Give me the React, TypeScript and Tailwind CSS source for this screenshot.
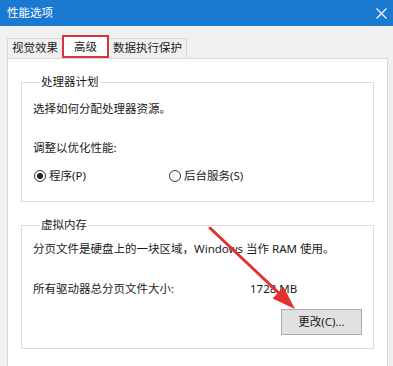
import React from 'react';

const font = "font-['Noto_Sans','Noto_Sans_CJK_SC',sans-serif]";

function Radio({ checked, label }: { checked?: boolean; label: string }) {
  return (
    <div className="flex items-center gap-[3px]">
      <span className="w-[12px] h-[12px] rounded-full border border-[#333] bg-white flex items-center justify-center">
        {checked && <span className="w-[6px] h-[6px] rounded-full bg-[#222]" />}
      </span>
      <span>{label}</span>
    </div>
  );
}

function Tab({ label, active }: { label: string; active?: boolean }) {
  if (active) {
    return (
      <div className="h-[23px] -mx-[1px] px-[10px] pt-[2px] bg-white border-2 border-[#d6353c] relative z-10 leading-[16px]">
        {label}
      </div>
    );
  }
  return (
    <div className="h-[20px] px-[4px] bg-[#f0f0f0] border border-b-0 border-[#d9d9d9] leading-[18px]">
      {label}
    </div>
  );
}

export default function App() {
  return (
    <div className={`relative w-[393px] h-[366px] overflow-hidden bg-[#f0f0f0] text-[11.5px] text-[#1b1b1b] ${font}`}>
      {/* title bar */}
      <div className="h-[26px] bg-[#1a7ad2] flex items-center justify-between pl-[7px] pr-[6px] text-white">
        <span className="leading-[16px]">性能选项</span>
        <svg width="11" height="11" viewBox="0 0 11 11">
          <path d="M0.5 0.5 L10.5 10.5 M10.5 0.5 L0.5 10.5" stroke="#fff" strokeWidth="1.1" />
        </svg>
      </div>

      <div className="pl-[7px] pr-[5px] pt-[9px]">
        {/* tabs */}
        <div className="flex items-end h-[23px]">
          <Tab label="视觉效果" />
          <Tab label="高级" active />
          <Tab label="数据执行保护" />
        </div>

        {/* panel */}
        <div className="bg-white border border-[#d9d9d9] h-[320px] px-[13px] pt-[15px]">
          <fieldset className="border border-[#dcdcdc] px-[11px] pb-[17px]">
            <legend className="ml-[7px] px-[1px] leading-[16px]">处理器计划</legend>
            <div className="leading-[16px] pt-[11px]">选择如何分配处理器资源。</div>
            <div className="leading-[16px] mt-[23px]">调整以优化性能:</div>
            <div className="flex leading-[16px] mt-[12px] pl-[1px]">
              <div className="w-[135px]">
                <Radio checked label="程序(P)" />
              </div>
              <Radio label="后台服务(S)" />
            </div>
          </fieldset>

          <fieldset className="mt-[15px] border border-[#dcdcdc] px-[11px] pb-[13px]">
            <legend className="ml-[7px] px-[1px] leading-[16px]">虚拟内存</legend>
            <div className="leading-[16px] pt-[8px]">分页文件是硬盘上的一块区域，Windows 当作 RAM 使用。</div>
            <div className="flex leading-[16px] mt-[24px]">
              <span className="w-[217px]">所有驱动器总分页文件大小:</span>
              <span>1728 MB</span>
            </div>
            <div className="flex justify-end mt-[12px]">
              <button className="w-[81px] h-[26px] bg-[#e1e1e1] border border-[#adadad] leading-[16px]">
                更改(C)...
              </button>
            </div>
          </fieldset>
        </div>
      </div>

      {/* red annotation arrow */}
      <svg className="absolute inset-0 pointer-events-none" width="393" height="366" viewBox="0 0 393 366">
        <line x1="210" y1="228" x2="281" y2="295" stroke="#e3312e" strokeWidth="3" strokeLinecap="round" />
        <polygon points="295,309 272.6,298.6 283.6,287" fill="#e3312e" />
      </svg>
    </div>
  );
}
